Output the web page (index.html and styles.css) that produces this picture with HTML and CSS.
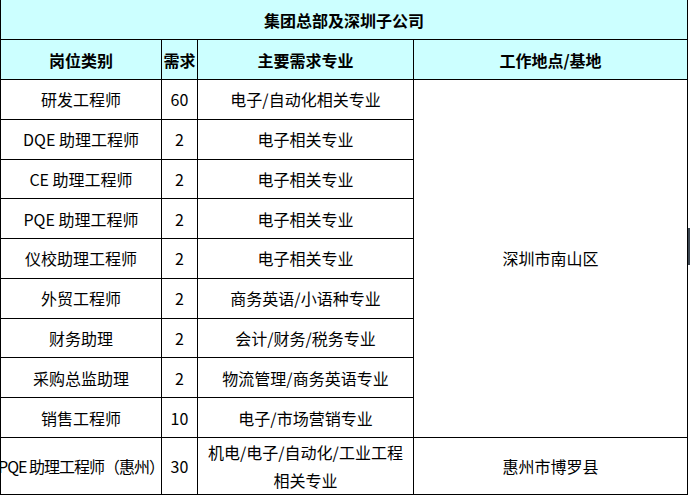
FILE: index.html
```html
<!DOCTYPE html>
<html lang="zh-CN">
<head>
<meta charset="utf-8">
<title>集团总部及深圳子公司</title>
<link rel="stylesheet" href="styles.css">
</head>
<body>
<table class="jobs">
  <colgroup>
    <col class="c-role">
    <col class="c-num">
    <col class="c-major">
    <col class="c-site">
  </colgroup>
  <tr class="title-row"><th colspan="4">集团总部及深圳子公司</th></tr>
  <tr class="head-row">
    <th>岗位类别</th><th>需求</th><th>主要需求专业</th><th>工作地点/基地</th>
  </tr>
  <tr class="data"><td>研发工程师</td><td>60</td><td>电子/自动化相关专业</td><td rowspan="9">深圳市南山区</td></tr>
  <tr class="data"><td>DQE 助理工程师</td><td>2</td><td>电子相关专业</td></tr>
  <tr class="data"><td>CE 助理工程师</td><td>2</td><td>电子相关专业</td></tr>
  <tr class="data"><td>PQE 助理工程师</td><td>2</td><td>电子相关专业</td></tr>
  <tr class="data"><td>仪校助理工程师</td><td>2</td><td>电子相关专业</td></tr>
  <tr class="data"><td>外贸工程师</td><td>2</td><td>商务英语/小语种专业</td></tr>
  <tr class="data"><td>财务助理</td><td>2</td><td>会计/财务/税务专业</td></tr>
  <tr class="data"><td>采购总监助理</td><td>2</td><td>物流管理/商务英语专业</td></tr>
  <tr class="data"><td>销售工程师</td><td>10</td><td>电子/市场营销专业</td></tr>
  <tr class="last">
    <td><div class="over">PQE 助理工程师（惠州）</div></td>
    <td>30</td>
    <td class="wrap">机电/电子/自动化/工业工程<br>相关专业</td>
    <td>惠州市博罗县</td>
  </tr>
</table>
<div class="edge-mark"></div>
</body>
</html>
```

FILE: styles.css
```css
html, body {
  margin: 0;
  padding: 0;
  background: #ffffff;
}

body {
  position: relative;
  width: 690px;
  height: 496px;
  overflow: hidden;
  font-family: "Noto Sans CJK SC", "Noto Sans", sans-serif;
  font-size: 16px;
  color: #000000;
}

.jobs {
  border-collapse: collapse;
  table-layout: fixed;
  width: 687px;
  margin-top: -1px;
}

.c-role { width: 161px; }
.c-num { width: 36px; }
.c-major { width: 216px; }
.c-site { width: 274px; }

.jobs th,
.jobs td {
  border: 1px solid #000000;
  padding: 0;
  text-align: center;
  vertical-align: middle;
  white-space: nowrap;
  line-height: 20px;
}

.jobs th {
  background: #ccffff;
  font-weight: bold;
}

.title-row { height: 40px; }
.head-row { height: 40px; }
.data { height: 39.78px; }
.last { height: 57px; }

.jobs td.wrap {
  line-height: 28px;
}

.over {
  display: flex;
  justify-content: center;
  white-space: nowrap;
  letter-spacing: -1px;
}

.edge-mark {
  position: absolute;
  left: 688px;
  top: 228px;
  width: 2px;
  height: 37px;
  background: #3c4650;
}
```
